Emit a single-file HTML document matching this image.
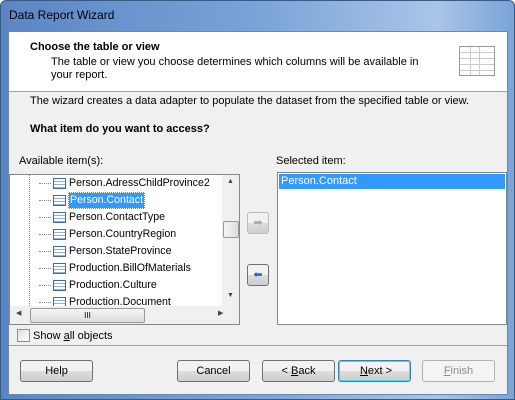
<html><head><style>
body{margin:0;width:515px;height:400px;overflow:hidden;font-family:"Liberation Sans",sans-serif;font-size:11px;color:#000;}
.win{position:absolute;left:0;top:0;width:513px;height:398px;border:1px solid #3a5a86;border-radius:6px 6px 0 0;background:linear-gradient(90deg,#5b86c4,#7aa3d8 50%,#a9c5e8 85%,#7aa3d8);}
.client{position:absolute;left:7px;top:30px;width:498px;height:362px;background:#f0f0f0;border:1px solid #6b87ae;}
.a{position:absolute;white-space:nowrap;}
.btn{position:absolute;height:20px;border:1px solid #707070;border-radius:3px;background:linear-gradient(#f2f2f2 50%,#dddddd 50%,#cfcfcf);text-align:center;line-height:20px;font-size:11px;}
.row{position:absolute;left:0;height:17px;line-height:17px;}
.ic{position:absolute;left:43px;top:3px;width:13px;height:11px;border:1px solid #3b6bb5;background:repeating-linear-gradient(#fff 0 2px,#8fb0dc 2px 3px);box-sizing:border-box;}
.dt{position:absolute;left:29px;top:8px;width:12px;border-top:1px dotted #888;}
.row span{font-size:10.6px}
</style></head><body>
<div class="win">
<div class="a" style="left:8px;top:7px;font-size:12px;color:#000">Data Report Wizard</div>
<div class="client">
<div class="a" style="left:0;top:0;width:498px;height:59px;background:#fff;border-bottom:1px solid #a0a0a0"></div>
<div class="a" style="left:21px;top:9px;font-weight:bold">Choose the table or view</div>
<div class="a" style="left:42px;top:24px">The table or view you choose determines which columns will be available in</div>
<div class="a" style="left:42px;top:37px">your report.</div>
<div class="a" style="left:450px;top:14px;width:34px;height:28px;border:1px solid #999;background:repeating-linear-gradient(#fff 0 5px,#ccc 5px 6px);"><div style="position:absolute;left:10px;top:0;width:8px;height:28px;border-left:1px solid #ccc;border-right:1px solid #ccc"></div></div>
<div class="a" style="left:21px;top:63px">The wizard creates a data adapter to populate the dataset from the specified table or view.</div>
<div class="a" style="left:21px;top:91px;font-weight:bold">What item do you want to access?</div>
<div class="a" style="left:10px;top:123px">Available item(s):</div>
<div class="a" style="left:267px;top:123px">Selected item:</div>
<div class="a" style="left:0px;top:142px;width:229px;height:149px;border:1px solid #828790;background:#fff;overflow:hidden">
 <div class="a" style="left:19px;top:0;height:131px;border-left:1px dotted #888"></div>
 <div class="row" style="top:0"><div class="dt"></div><div class="ic"></div><span class="a" style="left:59px">Person.AdressChildProvince2</span></div>
 <div class="row" style="top:17px"><div class="dt"></div><div class="ic"></div><span class="a" style="left:58px;background:#3399ff;color:#fff;padding:0 1px;border:1px dotted #ffd;line-height:15px">Person.Contact</span></div>
 <div class="row" style="top:34px"><div class="dt"></div><div class="ic"></div><span class="a" style="left:59px">Person.ContactType</span></div>
 <div class="row" style="top:51px"><div class="dt"></div><div class="ic"></div><span class="a" style="left:59px">Person.CountryRegion</span></div>
 <div class="row" style="top:68px"><div class="dt"></div><div class="ic"></div><span class="a" style="left:59px">Person.StateProvince</span></div>
 <div class="row" style="top:85px"><div class="dt"></div><div class="ic"></div><span class="a" style="left:59px">Production.BillOfMaterials</span></div>
 <div class="row" style="top:102px"><div class="dt"></div><div class="ic"></div><span class="a" style="left:59px">Production.Culture</span></div>
 <div class="row" style="top:119px"><div class="dt"></div><div class="ic"></div><span class="a" style="left:59px">Production.Document</span></div>
 <div class="a" style="left:212px;top:0;width:17px;height:131px;background:#f0f0f0"></div>
 <div class="a" style="left:217px;top:3px;font-size:7px;color:#444">▲</div>
 <div class="a" style="left:217px;top:117px;font-size:7px;color:#444">▼</div>
 <div class="a" style="left:213px;top:46px;width:14px;height:15px;border:1px solid #999;border-radius:2px;background:linear-gradient(90deg,#f4f4f4,#ddd)"></div>
 <div class="a" style="left:0;top:131px;width:229px;height:18px;background:#f0f0f0"></div>
 <div class="a" style="left:6px;top:134px;font-size:7px;color:#444">◀</div>
 <div class="a" style="left:208px;top:134px;font-size:7px;color:#444">▶</div>
 <div class="a" style="left:20px;top:133px;width:113px;height:13px;border:1px solid #999;border-radius:2px;background:linear-gradient(#f4f4f4,#ddd);text-align:center;font-size:8px;line-height:13px">III</div>
</div>
<div class="btn" style="left:238px;top:180px;width:20px;height:20px;line-height:20px;color:#aaa;border-color:#bbb">➡</div>
<div class="btn" style="left:238px;top:232px;width:20px;height:20px;line-height:20px;color:#2a68c8">⬅</div>
<div class="a" style="left:268px;top:140px;width:228px;height:151px;border:1px solid #828790;background:#fff">
 <div class="a" style="left:1px;top:1px;width:226px;height:15px;background:#3399ff;color:#fff;line-height:15px;padding-left:2px;box-sizing:border-box">Person.Contact</div>
</div>
<div class="a" style="left:8px;top:297px;width:11px;height:11px;border:1px solid #8e8f8f;background:linear-gradient(135deg,#ddd,#fff)"></div>
<div class="a" style="left:24px;top:298px">Show <u>a</u>ll objects</div>
<div class="a" style="left:0;top:313px;width:498px;border-top:1px solid #a0a0a0"></div>
<div class="btn" style="left:11px;top:328px;width:71px">Help</div>
<div class="btn" style="left:168px;top:328px;width:71px">Cancel</div>
<div class="btn" style="left:253px;top:328px;width:71px">&lt; <u>B</u>ack</div>
<div class="btn" style="left:329px;top:328px;width:71px;border-color:#3c7fb1;box-shadow:inset 0 0 0 1px #48d8fb">&nbsp;<u>N</u>ext &gt;</div>
<div class="btn" style="left:413px;top:328px;width:71px;color:#8d8d8d;border-color:#adb2b5;background:#f4f4f4"><u>F</u>inish</div>
</div></div>
</body></html>
